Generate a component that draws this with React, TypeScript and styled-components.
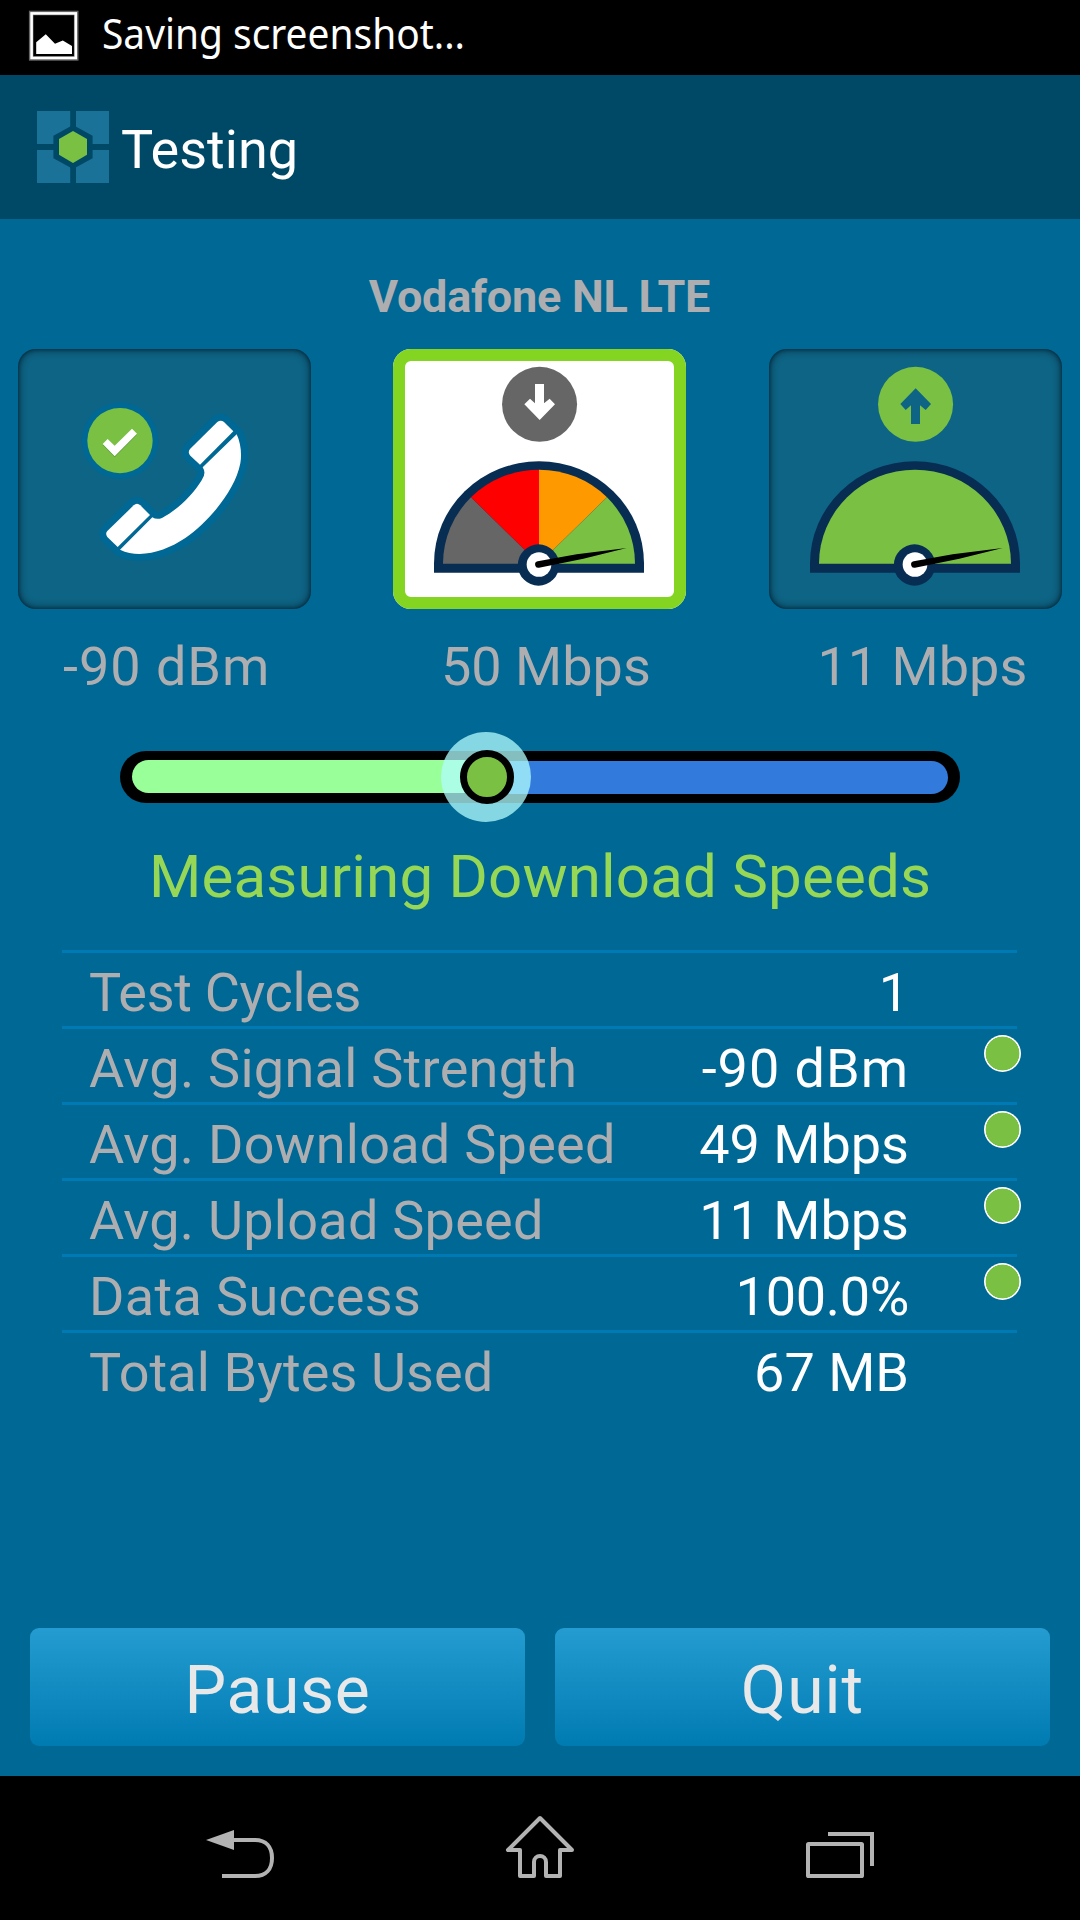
import React from "react";
import styled, { createGlobalStyle, css } from "styled-components";

const palette = {
  page: "#006894",
  header: "#004966",
  muted: "#aeaeb1",
  green: "#7ac143",
  navy: "#072d53",
  rule: "#007ab4",
  nav: "#b3b3b3",
};

const GlobalStyle = createGlobalStyle`
  * { box-sizing: border-box; }
  body { margin: 0; background: #000; font-family: Roboto, "Liberation Sans", sans-serif; }
  svg { display: block; }
`;

const Screen = styled.div`
  display: flex;
  flex-direction: column;
  width: 1080px;
  height: 1920px;
  overflow: hidden;
  background: #000;
`;

const StatusBar = styled.div`
  display: flex;
  align-items: center;
  height: 75px;
  padding: 0 0 3px 27px;
`;

const StatusText = styled.span`
  margin: 0 0 7px 21px;
  font-family: "Noto Sans", sans-serif;
  font-size: 42px;
  line-height: 58px;
  color: #fff;
  white-space: nowrap;
  transform: scaleX(0.926);
  transform-origin: left center;
`;

const Header = styled.header`
  display: flex;
  align-items: center;
  gap: 12px;
  height: 144px;
  padding-left: 37px;
  background: ${palette.header};
`;

const HeaderTitle = styled.h1`
  margin: 5px 0 0;
  font-size: 54px;
  font-weight: 400;
  line-height: 64px;
  color: #fff;
`;

const Main = styled.main`
  display: flex;
  flex: 1;
  flex-direction: column;
  padding: 52px 0 30px;
  background: ${palette.page};
`;

const Carrier = styled.h2`
  margin: 0 1px 26px 0;
  font-size: 45px;
  font-weight: 700;
  line-height: 52px;
  letter-spacing: -0.26px;
  text-align: center;
  color: ${palette.muted};
`;

const Tiles = styled.div`
  display: flex;
  gap: 82px;
  padding-left: 18px;
`;

const Tile = styled.div`
  display: flex;
  flex-direction: column;
  gap: 27px;
  width: 293px;

  &:last-child {
    margin-left: 1px;
  }
`;

const TileFace = styled.div<{ $active?: boolean }>`
  height: 260px;
  border-radius: 18px;
  ${({ $active }) =>
    $active
      ? css`
          background: #fff;
          box-shadow: inset 0 0 0 12px #84d422;
        `
      : css`
          background: #0e6485;
          box-shadow:
            inset 0 0 3px 0 rgba(0, 18, 28, 0.45),
            inset 0 0 8px 0 rgba(0, 18, 28, 0.85);
        `}
`;

const TileLabel = styled.div<{ $inset: number; $spacing?: number }>`
  padding-left: ${({ $inset }) => $inset}px;
  font-size: 54px;
  line-height: 61px;
  letter-spacing: ${({ $spacing = 0 }) => $spacing}px;
  white-space: nowrap;
  color: ${palette.muted};
`;

const Track = styled.div`
  position: relative;
  display: flex;
  flex-shrink: 0;
  align-items: flex-start;
  width: 840px;
  height: 52px;
  margin: 54px 0 38px 120px;
  padding: 9px 12px 0;
  border-radius: 26px;
  background: #000;
`;

const Done = styled.div`
  width: 354px;
  height: 33px;
  border-radius: 17px 0 0 17px;
  background: #9f9;
`;

const Remaining = styled.div`
  flex: 1;
  height: 33px;
  margin-top: 1px;
  border-radius: 0 17px 17px 0;
  background: #327bdd;
`;

const Knob = styled.div`
  position: absolute;
  top: -19px;
  left: 321px;
  display: grid;
  place-items: center;
  width: 90px;
  height: 90px;
  border-radius: 50%;
  background: rgba(178, 254, 254, 0.75);
`;

const KnobCore = styled.div`
  width: 54px;
  height: 54px;
  margin-left: 2px;
  border: 7px solid #000;
  border-radius: 50%;
  background: ${palette.green};
`;

const Phase = styled.div`
  margin-bottom: 38px;
  font-size: 60px;
  line-height: 71px;
  letter-spacing: 0.2px;
  text-align: center;
  white-space: nowrap;
  color: #96d855;
`;

const Stats = styled.div`
  width: 955px;
  margin-left: 62px;
`;

const StatRow = styled.div`
  display: grid;
  grid-template-columns: 27px 1fr auto 75px 33px;
  height: 76px;
  border-top: 3px solid ${palette.rule};
  font-size: 54px;
  line-height: 73px;
  white-space: nowrap;
`;

const StatLabel = styled.span<{ $spacing: number }>`
  grid-column: 2;
  padding-top: 3px;
  letter-spacing: ${({ $spacing }) => $spacing}px;
  color: ${palette.muted};
`;

const StatValue = styled.span<{ $spacing: number }>`
  grid-column: 3;
  padding-top: 3px;
  letter-spacing: ${({ $spacing }) => $spacing}px;
  color: #fff;
`;

const Dot = styled.span`
  grid-column: 5;
  width: 37px;
  height: 37px;
  margin-top: 6px;
  border-radius: 50%;
  background: radial-gradient(circle, ${palette.green} 16.6px, #fff 17.2px);
`;

const Actions = styled.div`
  display: grid;
  grid-template-columns: 1fr 1fr;
  gap: 30px;
  margin-top: auto;
  padding: 0 30px;
`;

const ActionButton = styled.button<{ $spacing: number }>`
  height: 118px;
  padding: 7px 0 0;
  border: 0;
  border-radius: 9px;
  background: linear-gradient(#249cd1, #007bb2);
  font-family: inherit;
  font-size: 66px;
  line-height: 78px;
  letter-spacing: ${({ $spacing }) => $spacing}px;
  color: #e8e8e8;
`;

const NavBar = styled.nav`
  display: grid;
  grid-template-columns: repeat(3, 300px);
  justify-content: center;
  align-items: center;
  height: 144px;
`;

const NavItem = styled.div`
  display: flex;
  justify-content: center;
`;

const PictureIcon = () => (
  <svg width="54" height="54" viewBox="27 9 54 54">
    <rect x="31.2" y="13" width="45" height="45.4" fill="none" stroke="#666" strokeWidth="4.6" />
    <rect x="31.6" y="13.4" width="44.2" height="44.6" fill="none" stroke="#fff" strokeWidth="2.6" />
    <path d="M36.2 54V42.3L45.8 34.3L55 43.7L62.8 40.5L72 46V54Z" fill="#fff" />
  </svg>
);

const AppLogo = () => (
  <svg width="72" height="72" viewBox="0 0 72 72">
    <g fill="#1b7299">
      <rect width="33.2" height="33" />
      <rect x="39" width="33" height="33" />
      <rect y="39" width="33.2" height="33" />
      <rect x="39" y="39" width="33" height="33" />
    </g>
    <path d="M36 14L55.6 24.7V47.3L36 58L16.4 47.3V24.7Z" fill={palette.header} />
    <path d="M36 20L50 28V43.7L36 52L22 43.7V28Z" fill={palette.green} />
  </svg>
);

const HANDSET_PARTS = [
  "M652 276Q662 268 672 276L700 304L600 404L571 377Q562 367 570 357Z",
  "M401 526Q411 517 421 526L450 555L353 651L322 621Q315 611 322 603Z",
  "M710 313C722 338 726 372 721 400C706 480 630 572 556 624C496 664 420 688 360 659L457 562Q470 570 486 564C530 540 575 500 605 451Q620 430 608 412Z",
];

const PhoneArt = () => (
  <svg width="293" height="260" viewBox="54 57 879 780">
    <circle cx="360" cy="332" r="115" fill={palette.page} />
    <g fill={palette.page} stroke={palette.page} strokeWidth="42" strokeLinejoin="round">
      {HANDSET_PARTS.map((d) => (
        <path key={d} d={d} />
      ))}
    </g>
    <g fill="#fff">
      {HANDSET_PARTS.map((d) => (
        <path key={d} d={d} />
      ))}
    </g>
    <circle cx="360" cy="332" r="98" fill={palette.green} />
    <path d="M308 345L323 330L344 350L396 299L411 314L344 382Z" fill="#4f8a2c" opacity="0.7" />
    <path d="M308 342L323 327L344 347L396 296L411 311L344 379Z" fill="#fff" />
  </svg>
);

const ARROWS = {
  down: "M495 162H522V220L539 206L555 223L509 270L463 223L480 206L495 220Z",
  up: "M509 175L555 222L539 240L522 226V282H495V226L479 240L463 222Z",
};

interface GaugeProps {
  direction: "up" | "down";
  badge: string;
  arrow: string;
  sectors: [string, string, string, string];
}

const GaugeArt = ({ direction, badge, arrow, sectors }: GaugeProps) => (
  <svg width="293" height="260" viewBox="69 57 879 780">
    <circle cx="508.7" cy="223" r="112.5" fill={badge} />
    <path d={ARROWS[direction]} fill={arrow} />
    <path d="M192 728V700A315 306 0 0 1 822 700V728Z" fill={palette.navy} />
    {sectors.every((c) => c === sectors[0]) ? (
      <path d="M219 701A288 282 0 0 1 795 701Z" fill={sectors[0]} />
    ) : (
      <>
        <path d="M507 701H219A288 282 0 0 1 303 502Z" fill={sectors[0]} />
        <path d="M507 701L303 502A288 282 0 0 1 507 419Z" fill={sectors[1]} />
        <path d="M507 701V419A288 282 0 0 1 711 502Z" fill={sectors[2]} />
        <path d="M507 701L711 502A288 282 0 0 1 795 701Z" fill={sectors[3]} />
      </>
    )}
    <circle cx="505.5" cy="705" r="62" fill={palette.navy} />
    <circle cx="507" cy="703.5" r="37" fill="#fff" />
    <path d="M503 694L620 673L770 654L640 686L507 713A9.5 9.5 0 0 1 503 694Z" fill="#000" />
  </svg>
);

const BackIcon = () => (
  <svg width="72" height="72" viewBox="204 1812 72 72">
    <path d="M206 1840L234 1830V1850Z" fill={palette.nav} />
    <path
      d="M233 1840H255C266 1840 272 1847 272 1858S266 1876 255 1876H222"
      fill="none"
      stroke={palette.nav}
      strokeWidth="4"
    />
  </svg>
);

const HomeIcon = () => (
  <svg width="72" height="72" viewBox="504 1812 72 72">
    <path
      d="M540 1818L508 1850H520V1876H534V1862A6 6 0 0 1 546 1862V1876H560V1850H572Z"
      fill="none"
      stroke={palette.nav}
      strokeWidth="4"
      strokeLinejoin="round"
    />
  </svg>
);

const RecentsIcon = () => (
  <svg width="72" height="72" viewBox="804 1812 72 72">
    <g fill="none" stroke={palette.nav} strokeWidth="4">
      <rect x="808" y="1844" width="54" height="32" rx="0.6" />
      <path d="M828 1834H872V1866" />
    </g>
  </svg>
);

interface Stat {
  label: string;
  value: string;
  labelSpacing: number;
  valueSpacing: number;
  good?: boolean;
}

const STATS: Stat[] = [
  { label: "Test Cycles", value: "1", labelSpacing: -0.3, valueSpacing: 0 },
  { label: "Avg. Signal Strength", value: "-90 dBm", labelSpacing: 0.28, valueSpacing: 0.98, good: true },
  { label: "Avg. Download Speed", value: "49 Mbps", labelSpacing: 0.27, valueSpacing: 0, good: true },
  { label: "Avg. Upload Speed", value: "11 Mbps", labelSpacing: 0.26, valueSpacing: 0, good: true },
  { label: "Data Success", value: "100.0%", labelSpacing: 0.36, valueSpacing: -0.3, good: true },
  { label: "Total Bytes Used", value: "67 MB", labelSpacing: 0.1, valueSpacing: 0 },
];

export default function App() {
  return (
    <Screen>
      <GlobalStyle />
      <StatusBar>
        <PictureIcon />
        <StatusText>Saving screenshot...</StatusText>
      </StatusBar>
      <Header>
        <AppLogo />
        <HeaderTitle>Testing</HeaderTitle>
      </Header>
      <Main>
        <Carrier>Vodafone NL LTE</Carrier>
        <Tiles>
          <Tile>
            <TileFace>
              <PhoneArt />
            </TileFace>
            <TileLabel $inset={45} $spacing={0.98}>-90 dBm</TileLabel>
          </Tile>
          <Tile>
            <TileFace $active>
              <GaugeArt
                direction="down"
                badge="#666"
                arrow="#fff"
                sectors={["#666", "#f00", "#f90", palette.green]}
              />
            </TileFace>
            <TileLabel $inset={48}>50 Mbps</TileLabel>
          </Tile>
          <Tile>
            <TileFace>
              <GaugeArt
                direction="up"
                badge={palette.green}
                arrow="#0e6485"
                sectors={[palette.green, palette.green, palette.green, palette.green]}
              />
            </TileFace>
            <TileLabel $inset={48.5}>11 Mbps</TileLabel>
          </Tile>
        </Tiles>
        <Track>
          <Done />
          <Remaining />
          <Knob>
            <KnobCore />
          </Knob>
        </Track>
        <Phase>Measuring Download Speeds</Phase>
        <Stats>
          {STATS.map((s) => (
            <StatRow key={s.label}>
              <StatLabel $spacing={s.labelSpacing}>{s.label}</StatLabel>
              <StatValue $spacing={s.valueSpacing}>{s.value}</StatValue>
              {s.good && <Dot />}
            </StatRow>
          ))}
        </Stats>
        <Actions>
          <ActionButton $spacing={0.7}>Pause</ActionButton>
          <ActionButton $spacing={1}>Quit</ActionButton>
        </Actions>
      </Main>
      <NavBar>
        <NavItem>
          <BackIcon />
        </NavItem>
        <NavItem>
          <HomeIcon />
        </NavItem>
        <NavItem>
          <RecentsIcon />
        </NavItem>
      </NavBar>
    </Screen>
  );
}
